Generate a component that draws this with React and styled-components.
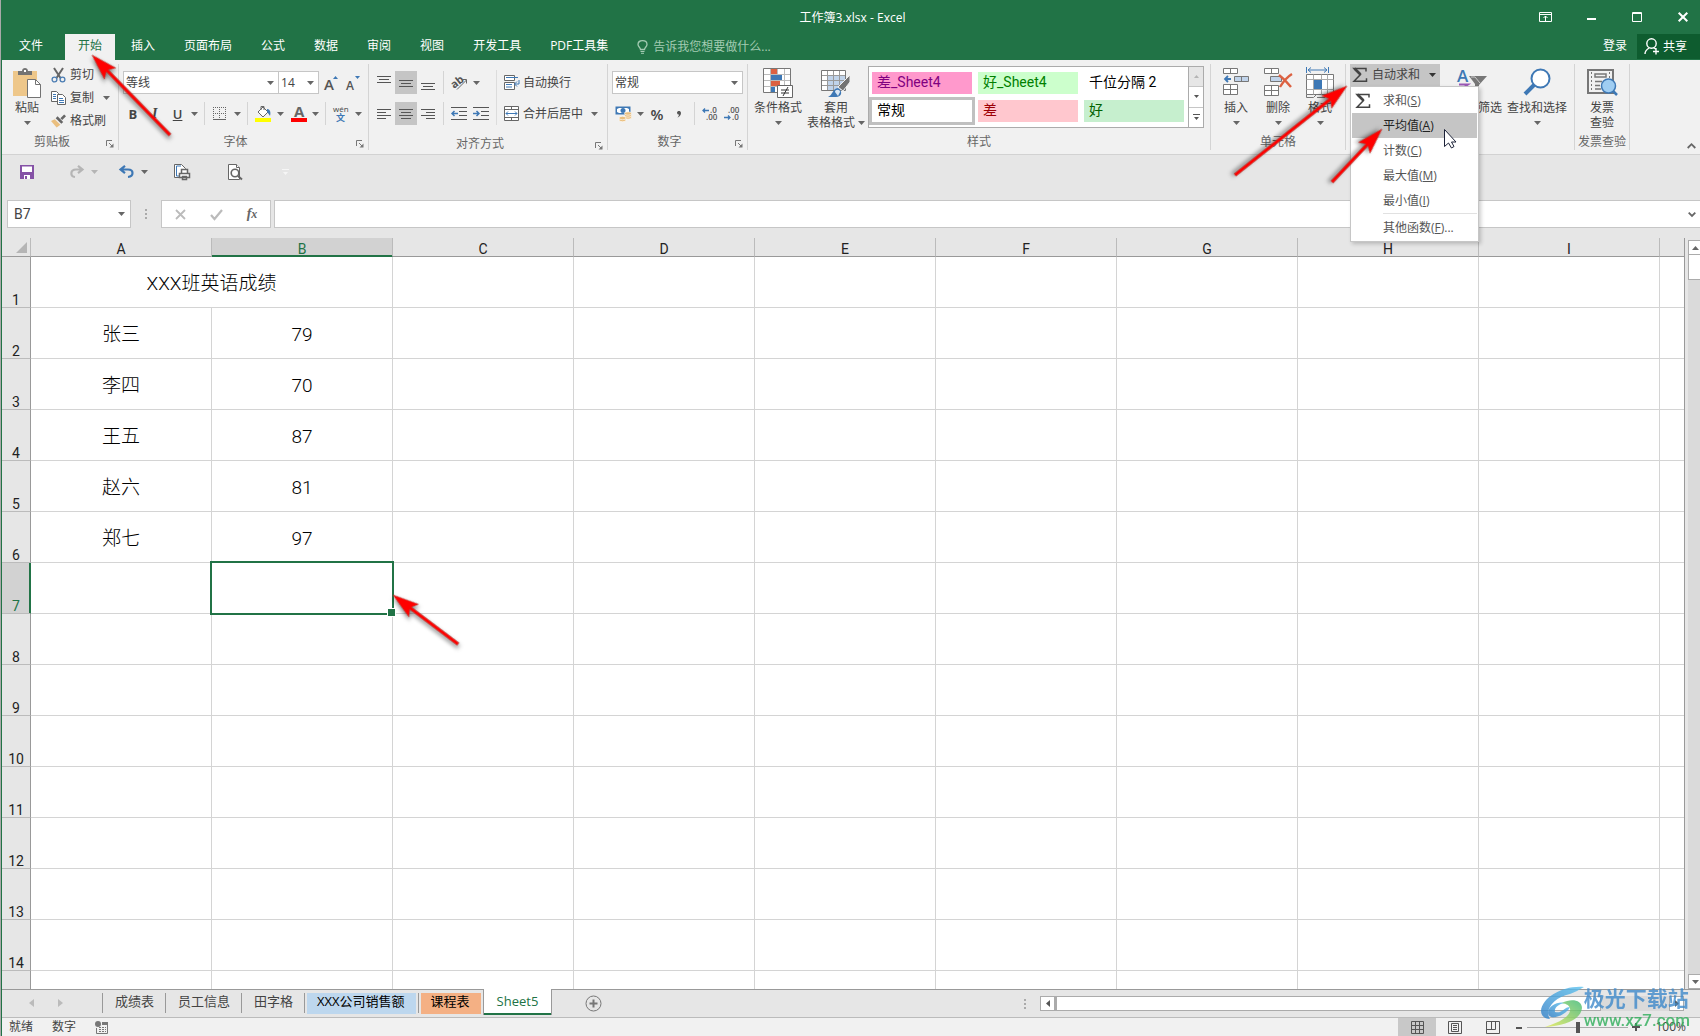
import React, { useState } from "react";
import styled, { createGlobalStyle } from "styled-components";

const COLUMNS = ["A", "B", "C", "D", "E", "F", "G", "H", "I"];
const ROWS = Array.from({ length: 15 }, (_, i) => i + 1);

const SCORES = {
  2: ["张三", 79],
  3: ["李四", 70],
  4: ["王五", 87],
  5: ["赵六", 81],
  6: ["郑七", 97],
};

const RIBBON_TABS = [
  "开始",
  "插入",
  "页面布局",
  "公式",
  "数据",
  "审阅",
  "视图",
  "开发工具",
  "PDF工具集",
];

const CELL_STYLES = [
  { name: "差_Sheet4", bg: "#ff99cc", color: "#800080" },
  { name: "好_Sheet4", bg: "#ccffcc", color: "#008000" },
  { name: "千位分隔 2", bg: "#ffffff", color: "#000000" },
  { name: "常规", bg: "#ffffff", color: "#000000", selected: true },
  { name: "差", bg: "#ffc7ce", color: "#9c0006" },
  { name: "好", bg: "#c6efce", color: "#006100" },
];

const SUM_MENU = [
  { label: "求和", key: "S", icon: true },
  { label: "平均值", key: "A", active: true },
  { label: "计数", key: "C" },
  { label: "最大值", key: "M" },
  { label: "最小值", key: "I" },
  { label: "其他函数", key: "F", more: true },
];

const SHEETS = [
  { name: "成绩表" },
  { name: "员工信息" },
  { name: "田字格" },
  { name: "XXX公司销售额", color: "#bdd7ee" },
  { name: "课程表", color: "#f4b084" },
];

/* ---------- icons ---------- */

const Caret = ({ color = "#666" }) => (
  <svg width="7" height="4" viewBox="0 0 7 4">
    <path d="M0 0h7L3.5 4z" fill={color} />
  </svg>
);

const LauncherIcon = () => (
  <svg width="8" height="8" viewBox="0 0 8 8" fill="none" stroke="#777">
    <path d="M.5 6V.5H6M3 3l3 3" />
    <path d="M7.500 3.500v4h-4z" fill="#777" stroke="none" />
  </svg>
);

const SigmaIcon = () => (
  <svg width="16" height="16" viewBox="0 0 16 16" fill="none" stroke="#444">
    <path d="M14 4.500V1.500H2l6.500 6L2 14.200h12.500v-3" strokeWidth="1.500" />
    <path d="M2.500 1.500l6 6" strokeWidth="2.600" />
  </svg>
);

const PasteIcon = () => (
  <svg width="28" height="30" viewBox="0 0 28 30">
    <path d="M0 3h24v25H0z" fill="#eec78a" />
    <path d="M5 3h4c0-4 6-4 6 0h4v4H5z" fill="#737373" />
    <path d="M11 2h2v2h-2z" fill="#fff" />
    <path d="M14.500 11.500h8l5 5v13h-13z" fill="#fff" stroke="#737373" />
    <path d="M22.500 11.500v5h5" fill="none" stroke="#737373" />
  </svg>
);

const CutIcon = () => (
  <svg width="14" height="15" viewBox="0 0 14 15" fill="none">
    <path d="M2.500 0l6.500 10M11.500 0L5 10" stroke="#666" strokeWidth="2" />
    <circle cx="3" cy="11.500" r="2.400" stroke="#4b7db3" strokeWidth="1.300" />
    <circle cx="11" cy="11.500" r="2.400" stroke="#4b7db3" strokeWidth="1.300" />
  </svg>
);

const CopyIcon = () => (
  <svg width="15" height="14" viewBox="0 0 15 14" fill="#fff" stroke="#666">
    <path d="M.5.500h5l2 2v8h-7z" />
    <path d="M2 3.500h3M2 5.500h3M2 7.500h3" stroke="#3e78b5" />
    <path d="M6.500 3.500h5l3 3v7h-8z" />
    <path d="M8 7.500h4M8 9.500h5M8 11.500h5" stroke="#3e78b5" />
  </svg>
);

const BrushIcon = () => (
  <svg width="16" height="14" viewBox="0 0 16 14">
    <path d="M0 7l4-2 6 6-4 3z" fill="#eabf7f" />
    <path d="M5 4l2-2 6 6-2 2z" fill="#666" />
    <path d="M10 4l4-4 2 2-4 4z" fill="#666" />
  </svg>
);

const BorderIcon = () => (
  <svg width="16" height="14" viewBox="-1 0 16 14" fill="none" stroke="#666">
    <path
      d="M.5 0v12M6.500 0v12M12.500 0v12M0 .5h13M0 6.500h13"
      strokeDasharray="1 1"
    />
    <path d="M0 12.500h13" />
  </svg>
);

const FillIcon = () => (
  <svg width="17" height="17" viewBox="0 0 17 17">
    <path d="M3 7l5-5 5 5-5 5z" fill="#fff" stroke="#666" />
    <path d="M6 5V1.500h3V5" fill="none" stroke="#666" />
    <path d="M12 4c3 0 4 3 3 7-1-2-2-3-3-4z" fill="#3e78b5" />
    <path d="M0 13h16v4H0z" fill="#ffff00" />
  </svg>
);

const LinesIcon = ({ rows, start = 0 }) => (
  <svg width="14" height="14" viewBox="0 0 14 14" stroke="#555">
    {rows.map(([x1, x2], i) => (
      <path key={i} d={`M${x1} ${start + i * 3 + 0.5}H${x2}`} />
    ))}
  </svg>
);

const THREE = [
  [0, 14],
  [2, 12],
  [0, 14],
];
const LEFT = [
  [0, 14],
  [0, 9],
  [0, 14],
  [0, 9],
];
const CENTER = [
  [0, 14],
  [2, 12],
  [0, 14],
  [2, 12],
];
const RIGHT = [
  [0, 14],
  [5, 14],
  [0, 14],
  [5, 14],
];

const OrientationIcon = () => (
  <svg width="17" height="15" viewBox="0 0 17 15" fill="none">
    <text
      x="1"
      y="12"
      fontSize="11"
      fontWeight="700"
      fontFamily="Open Sans"
      fill="#555"
      transform="rotate(-38 5 10)"
    >
      ab
    </text>
    <path d="M6 14.500L15.500 5M11.500 4.500h4v4" stroke="#666" />
  </svg>
);

const IndentIcon = ({ out }) => (
  <svg width="16" height="13" viewBox="0 0 16 13" fill="none" stroke="#555">
    <path d="M0 .5h16M8 4.500h8M8 8.500h8M0 12.500h16" />
    <path
      d={out ? "M7 6.500H1M3.500 4L1 6.500 3.500 9" : "M0 6.500h6M3.500 4L6 6.500 3.500 9"}
      stroke="#3e78b5"
      strokeWidth="1.500"
    />
  </svg>
);

const WrapIcon = () => (
  <svg width="16" height="15" viewBox="0 0 16 15" fill="#fff" stroke="#666">
    <path d="M.5.500h10v5H.5zM.5 7.500h10v7H.5z" />
    <path d="M2 2.500h12M2 9.500h6M2 12h6" stroke="#3e78b5" />
    <path d="M15 5v4h-4M13 6.500L10.500 9l2.500 2.500" stroke="#3e78b5" fill="none" />
  </svg>
);

const MergeIcon = () => (
  <svg width="16" height="15" viewBox="0 0 16 15" fill="#fff" stroke="#666">
    <path d="M.5.500h14v14H.5zM.5 3.500h14M.5 11.500h14M7.500.500v3M7.500 11.500v3" />
    <path
      d="M2 7.500h11M4 5.500l-2 2 2 2M11 5.500l2 2-2 2"
      stroke="#3e78b5"
      fill="none"
    />
  </svg>
);

const CurrencyIcon = () => (
  <svg width="17" height="16" viewBox="0 0 17 16">
    <path d="M.5.500h15v8H.5z" fill="#3e78b5" />
    <path d="M2 3l2-1h8l2 1v3l-2 1H4L2 6z" fill="#fff" />
    <circle cx="8" cy="4.500" r="2.500" fill="#3e78b5" />
    <g fill="#eabf7f" stroke="#fff" strokeWidth=".6">
      <ellipse cx="13" cy="11.500" rx="3.500" ry="1.700" />
      <ellipse cx="13" cy="9.500" rx="3.500" ry="1.700" />
      <ellipse cx="13" cy="7.500" rx="3.500" ry="1.700" />
      <ellipse cx="7.500" cy="14" rx="3.500" ry="1.700" />
      <ellipse cx="7.500" cy="12" rx="3.500" ry="1.700" />
    </g>
  </svg>
);

const DecimalIcon = ({ more }) => (
  <svg width="16" height="14" viewBox="0 0 16 14" fill="#555">
    <g fontFamily="Open Sans" fontSize="8" fontWeight="600">
      <text x={more ? 8 : 4} y="6">
        {more ? ".0" : ".00"}
      </text>
      <text x={more ? 4 : 8} y="13">
        {more ? ".00" : ".0"}
      </text>
    </g>
    <path
      d={more ? "M7 3.500H1M3 1.500l-2 2 2 2" : "M0 10.500h6M4 8.500l2 2-2 2"}
      fill="none"
      stroke="#3e78b5"
      strokeWidth="1.300"
    />
  </svg>
);

const ConditionalIcon = () => (
  <svg width="30" height="30" viewBox="0 0 30 30">
    <path d="M.5.500h27v24H.5z" fill="#fff" stroke="#777" />
    <path
      d="M7.500 1v23M14.500 1v23M21.500 1v23M1 6.500h26M1 12.500h26M1 18.500h26"
      stroke="#bbb"
    />
    <path d="M8 1h6v5H8zM8 13h9v5H8z" fill="#dc6141" />
    <path d="M8 7h11v5H8zM8 19h4v5H8z" fill="#3e78b5" />
    <path d="M14.500 17.500h15v12h-15z" fill="#fff" stroke="#666" />
    <path d="M18 22h8M18 25h8M25 19l-5 9" stroke="#333" />
  </svg>
);

const TableStyleIcon = () => (
  <svg width="30" height="30" viewBox="0 0 30 30">
    <path d="M.5 2.500h24v20H.5z" fill="#fff" stroke="#777" />
    <path d="M7 8h17v14H7z" fill="#c0d3ea" />
    <path
      d="M6.500 3v19M12.500 3v19M18.500 3v19M1 7.500h23M1 12.500h23M1 17.500h23"
      stroke="#999"
      fill="none"
    />
    <path d="M29 7v7l-7 9-5-4z" fill="#737373" stroke="#f1f1f1" />
    <path d="M7 29c5-2 4-8 10-9 5 3 4 9-2 9z" fill="#3e78b5" />
    <path d="M14 24c0-3 5-3 5 0l-2 4" fill="#dbe7f4" />
  </svg>
);

const InsertIcon = () => (
  <svg width="28" height="30" viewBox="0 0 28 30" fill="#fff" stroke="#777">
    <path d="M1.500.500h14v5h-14zM8.500.500v5M1.500 16.500h14v10h-14zM8.500 16.500v10M1.500 21.500h14" />
    <path d="M12.500 8.500h14v5h-14zM19.500 8.500v5" fill="#c0d3ea" />
    <path
      d="M9 11H3M6 8l-3 3 3 3"
      fill="none"
      stroke="#3e78b5"
      strokeWidth="1.800"
    />
  </svg>
);

const DeleteIcon = () => (
  <svg width="28" height="30" viewBox="0 0 28 30" fill="#fff" stroke="#777">
    <path d="M.5.500h14v5H.5zM7.500.500v5M.5 17.500h14v10H.5zM7.500 17.500v10M.5 22.500h14" />
    <path d="M6.500 8.500h11v5h-11z" fill="#c0d3ea" />
    <path
      d="M15 7c4 3 8 7 12 12M28 6c-5 3-9 8-12 13"
      fill="none"
      stroke="#dc6141"
      strokeWidth="2.400"
    />
  </svg>
);

const FormatIcon = () => (
  <svg width="28" height="30" viewBox="0 1 28 30" fill="#fff" stroke="#777">
    <path
      d="M.5 0v6M22.500 0v6M2 3h19M5 .5L2 3l3 2.500M18 .5L21 3l-3 2.500"
      fill="none"
      stroke="#3e78b5"
    />
    <path d="M.5 7.500h27v20H.5z" />
    <path
      d="M7.500 7.500v20M15.500 7.500v20M21.500 7.500v20M.5 12.500h27M.5 22.500h27"
      stroke="#aaa"
    />
    <path d="M8 13h8v9H8z" fill="#3e78b5" stroke="none" />
    <path d="M.5 27.500v3h7l3-3M11 30.500h8l3-3v3h5" fill="none" />
  </svg>
);

const SortIcon = () => (
  <svg width="30" height="30" viewBox="0 0 30 30">
    <text
      x="0"
      y="14"
      fontFamily="Open Sans"
      fontSize="17"
      fontWeight="600"
      fill="#3e78b5"
    >
      A
    </text>
    <path d="M2 16.500h9L6 20" stroke="#9b59b6" strokeWidth="2" fill="none" />
    <path d="M12 8h18l-8 9v8l-4-3v-6z" fill="#777" />
    <path d="M14 9h4l5 6" stroke="#ccc" fill="none" />
  </svg>
);

const FindIcon = () => (
  <svg width="28" height="30" viewBox="0 0 28 30" fill="none">
    <path d="M11 17L2 26" stroke="#3e78b5" strokeWidth="4" />
    <circle cx="17.500" cy="10.500" r="9" fill="#fff" stroke="#3e78b5" strokeWidth="2" />
  </svg>
);

const InvoiceIcon = () => (
  <svg width="30" height="30" viewBox="0 0 30 30" fill="none" stroke="#777">
    <path d="M1 2h25v23H1z" strokeWidth="2" />
    <path d="M4.500 4v20M22.500 4v8" strokeDasharray="2 2" />
    <path d="M8 6h11v3H8zM8 13.500h7M8 17.500h5M8 21h6" strokeWidth="1.500" />
    <circle cx="21.500" cy="18" r="7" fill="#9fcdf2" stroke="#3e78b5" strokeWidth="1.500" />
    <path d="M26 23l4 4" stroke="#3e78b5" strokeWidth="2.500" />
  </svg>
);

const SaveIcon = () => (
  <svg width="14" height="14" viewBox="0 0 14 14">
    <path d="M0 0h14v14H0z" fill="#8552a6" />
    <path d="M2 1.500h10V7H2zM4 10h6v4H4z" fill="#fff" />
    <path d="M5 11h2v3H5z" fill="#8552a6" />
  </svg>
);

const UndoIcon = ({ flip, color }) => (
  <svg width="14" height="14" viewBox={flip ? "1 0 14 14" : "1 0 14 14"} fill="none">
    <path
      d={
        flip
          ? "M13 4.500H7c-6 0-6 7-1 7.500M9 .8l4.500 3.700L9 8.200"
          : "M2 4.500h7c6 0 6 7 0 7.500M6 .8L1.500 4.500 6 8.200"
      }
      stroke={color}
      strokeWidth="2.200"
    />
  </svg>
);

const PrintIcon = () => (
  <svg width="17" height="16" viewBox="0 0 17 16" fill="#fff" stroke="#666">
    <path d="M.5.500h7l4 4v9H.5z" />
    <path d="M7 2H2.500v10H5" fill="none" stroke="#3e78b5" />
    <path
      d="M7.500 5.500h6v4h-6zM5.500 9.500h10v4h-10zM8.500 12.500h4v3h-4z"
      strokeWidth="1.500"
    />
  </svg>
);

const PreviewIcon = () => (
  <svg width="15" height="16" viewBox="0 0 15 16" fill="#fff" stroke="#666">
    <path d="M.5.500h8l3 3v12H.5z" />
    <path d="M8.500.500v3h3" />
    <circle cx="7" cy="9" r="3.800" strokeWidth="1.600" />
    <path d="M10 12l4 3.500" strokeWidth="2" />
  </svg>
);

const BulbIcon = () => (
  <svg width="11" height="14" viewBox="0 0 11 14" fill="none" stroke="#a3cbb2">
    <path
      d="M3.500 9.500C3.500 7.500 1 7 1 4.500 1 2 3 .7 5.500.7S10 2 10 4.500C10 7 7.500 7.500 7.500 9.500z"
      strokeWidth="1.300"
    />
    <path d="M3.500 11.500h4M4 13.300h3" />
  </svg>
);

const ShareIcon = () => (
  <svg width="16" height="17" viewBox="0 0 16 17" fill="none" stroke="#fff">
    <circle cx="7.500" cy="5.500" r="4.700" strokeWidth="1.400" />
    <path
      d="M1 16c0-3 1.500-4.500 4-6M9.500 9.500l2 1.500M12 10v6.500M9 13.500h6"
      strokeWidth="1.400"
    />
  </svg>
);

const Arrow = ({ tip, tail }) => {
  const dx = tail[0] - tip[0];
  const dy = tail[1] - tip[1];
  const len = Math.hypot(dx, dy);
  const deg = (Math.atan2(dy, dx) * 180) / Math.PI;
  return (
    <g transform={`translate(${tip[0]} ${tip[1]}) rotate(${deg})`}>
      <path
        d={`M0 0L26 -8L22 -1.500H${len}V1.500H22L26 8Z`}
        fill="#ff0000"
        stroke="#b03a30"
        strokeWidth=".5"
      />
    </g>
  );
};

/* ---------- page ---------- */

const App = () => {
  const [tab, setTab] = useState("开始");
  const [font, setFont] = useState("等线");
  const [size, setSize] = useState("14");
  const [format, setFormat] = useState("常规");
  const [formula, setFormula] = useState("");
  const [cell, setCell] = useState("B7");
  const [zoom, setZoom] = useState(50);

  return (
    <Window>
      <GlobalStyle />
      <TitleBar>
        <Title>工作簿3.xlsx - Excel</Title>
        <WindowControls>
          <button aria-label="功能区显示选项">
            <svg width="13" height="10" viewBox="0 0 13 10" fill="none" stroke="#fff">
              <path d="M.5.500h12v9H.5zM.5 2.500h12M6.500 9V4M4.500 6l2-2 2 2" />
            </svg>
          </button>
          <button aria-label="最小化">
            <svg width="9" height="10" viewBox="0 0 9 10">
              <path d="M0 6h9v2H0z" fill="#fff" />
            </svg>
          </button>
          <button aria-label="最大化">
            <svg width="10" height="10" viewBox="0 0 10 10" fill="none" stroke="#fff">
              <path d="M.5.500h9v9h-9zM0 1.500h10" />
            </svg>
          </button>
          <button aria-label="关闭">
            <svg width="10" height="10" viewBox="0 0 10 10">
              <path d="M.7.700l8.600 8.600M9.300.700L.7 9.300" stroke="#fff" strokeWidth="2" />
            </svg>
          </button>
        </WindowControls>
      </TitleBar>

      <TabBar>
        <FileTab>文件</FileTab>
        {RIBBON_TABS.map((name) => (
          <RibbonTab key={name} $active={name === tab} onClick={() => setTab(name)}>
            {name}
          </RibbonTab>
        ))}
        <TellMe>
          <BulbIcon />
          告诉我您想要做什么...
        </TellMe>
        <SignIn>登录</SignIn>
        <Share>
          <ShareIcon />
          共享
        </Share>
      </TabBar>

      <Body>
        <Ribbon>
          <Group $width={117}>
            <GroupBody>
              <BigButton $width={42}>
                <PasteIcon />
                <span>粘贴</span>
                <span>
                  <Caret />
                </span>
              </BigButton>
              <SmallStack>
                <SmallButton>
                  <CutIcon />
                  剪切
                </SmallButton>
                <SmallButton>
                  <CopyIcon />
                  复制
                  <CaretSlot>
                    <Caret />
                  </CaretSlot>
                </SmallButton>
                <SmallButton>
                  <BrushIcon />
                  格式刷
                </SmallButton>
              </SmallStack>
            </GroupBody>
            <GroupFooter label="剪贴板" launcher />
          </Group>

          <Group $width={250}>
            <ToolRows>
              <ToolRow>
                <Combo $width={158}>
                  <select
                    aria-label="字体"
                    value={font}
                    onChange={(e) => setFont(e.target.value)}
                  >
                    <option>等线</option>
                  </select>
                  <Caret />
                </Combo>
                <Combo $width={41}>
                  <select
                    aria-label="字号"
                    value={size}
                    onChange={(e) => setSize(e.target.value)}
                  >
                    <option>14</option>
                  </select>
                  <Caret />
                </Combo>
                <Tool aria-label="增大字号">
                  <svg width="14" height="16" viewBox="0 0 14 16" fill="#555">
                    <text x="0" y="15" fontFamily="Open Sans" fontSize="15" fontWeight="600">
                      A
                    </text>
                    <path d="M9 4l2.500-3L14 4z" fill="#3e78b5" />
                  </svg>
                </Tool>
                <Tool aria-label="减小字号">
                  <svg width="14" height="16" viewBox="0 0 14 16" fill="#555">
                    <text x="0" y="15" fontFamily="Open Sans" fontSize="12" fontWeight="600">
                      A
                    </text>
                    <path d="M9 1l2.500 3L14 1z" fill="#3e78b5" />
                  </svg>
                </Tool>
              </ToolRow>
              <ToolRow $gap={2}>
                <Tool $width={20}>
                  <b>B</b>
                </Tool>
                <Tool $width={20}>
                  <i>I</i>
                </Tool>
                <SplitTool>
                  <u>U</u>
                  <Caret />
                </SplitTool>
                <Divider $space={2} />
                <SplitTool aria-label="边框">
                  <BorderIcon />
                  <Caret />
                </SplitTool>
                <Divider $space={2} />
                <SplitTool aria-label="填充颜色">
                  <FillIcon />
                  <Caret />
                </SplitTool>
                <SplitTool aria-label="字体颜色">
                  <svg width="16" height="17" viewBox="0 0 16 17">
                    <text
                      x="3"
                      y="12"
                      fontFamily="Open Sans"
                      fontSize="15"
                      fontWeight="700"
                      fill="#666"
                    >
                      A
                    </text>
                    <path d="M0 13h16v4H0z" fill="#ff0000" />
                  </svg>
                  <Caret />
                </SplitTool>
                <Divider $space={2} />
                <SplitTool aria-label="拼音">
                  <svg width="16" height="17" viewBox="0 0 16 17">
                    <text x="0" y="7" fontFamily="Open Sans" fontSize="8" fill="#444">
                      wén
                    </text>
                    <text
                      x="3"
                      y="16"
                      fontFamily="Noto Sans CJK SC"
                      fontSize="9"
                      fontWeight="700"
                      fill="#3e78b5"
                    >
                      文
                    </text>
                  </svg>
                  <Caret />
                </SplitTool>
              </ToolRow>
            </ToolRows>
            <GroupFooter label="字体" launcher />
          </Group>

          <Group $width={239}>
            <GroupBody>
              <ToolRows $width={120}>
                <ToolRow>
                  <Tool aria-label="顶端对齐">
                    <LinesIcon rows={THREE} start={0} />
                  </Tool>
                  <Tool aria-label="垂直居中" $on>
                    <LinesIcon rows={THREE} start={4} />
                  </Tool>
                  <Tool aria-label="底端对齐">
                    <LinesIcon rows={THREE} start={7} />
                  </Tool>
                  <Divider $space={4} />
                  <SplitTool aria-label="方向">
                    <OrientationIcon />
                    <Caret />
                  </SplitTool>
                </ToolRow>
                <ToolRow>
                  <Tool aria-label="左对齐">
                    <LinesIcon rows={LEFT} start={2} />
                  </Tool>
                  <Tool aria-label="居中" $on>
                    <LinesIcon rows={CENTER} start={2} />
                  </Tool>
                  <Tool aria-label="右对齐">
                    <LinesIcon rows={RIGHT} start={2} />
                  </Tool>
                  <Divider $space={4} />
                  <Tool aria-label="减少缩进量">
                    <IndentIcon out />
                  </Tool>
                  <Tool aria-label="增加缩进量">
                    <IndentIcon />
                  </Tool>
                </ToolRow>
              </ToolRows>
              <TallDivider />
              <ToolRows>
                <WideTool>
                  <WrapIcon />
                  自动换行
                </WideTool>
                <WideTool>
                  <MergeIcon />
                  合并后居中
                  <CaretSlot>
                    <Caret />
                  </CaretSlot>
                </WideTool>
              </ToolRows>
            </GroupBody>
            <GroupFooter label="对齐方式" launcher />
          </Group>

          <Group $width={140}>
            <ToolRows>
              <ToolRow>
                <Combo $width={131}>
                  <select
                    aria-label="数字格式"
                    value={format}
                    onChange={(e) => setFormat(e.target.value)}
                  >
                    <option>常规</option>
                  </select>
                  <Caret />
                </Combo>
              </ToolRow>
              <ToolRow>
                <SplitTool aria-label="会计数字格式">
                  <CurrencyIcon />
                  <Caret />
                </SplitTool>
                <Tool>
                  <Percent>%</Percent>
                </Tool>
                <Tool aria-label="千位分隔样式">
                  <svg width="6" height="8" viewBox="0 0 6 8">
                    <path
                      d="M1 2.500C1 .5 5 .2 5 3 5 5.500 3 7 1.500 7.500 2.500 6.500 3 5.500 3 4.500 2 4.800 1 3.800 1 2.500z"
                      fill="#555"
                    />
                  </svg>
                </Tool>
                <Divider $space={4} />
                <Tool aria-label="增加小数位数">
                  <DecimalIcon more />
                </Tool>
                <Tool aria-label="减少小数位数">
                  <DecimalIcon />
                </Tool>
              </ToolRow>
            </ToolRows>
            <GroupFooter label="数字" launcher />
          </Group>

          <Group $width={463}>
            <GroupBody>
              <BigButton $width={52}>
                <ConditionalIcon />
                <span>条件格式</span>
                <span>
                  <Caret />
                </span>
              </BigButton>
              <BigButton $width={64}>
                <TableStyleIcon />
                <span>套用</span>
                <span>
                  表格格式
                  <Caret />
                </span>
              </BigButton>
              <Gallery>
                <GalleryGrid>
                  {CELL_STYLES.map(({ name, bg, color, selected }) => (
                    <StyleSwatch key={name} $bg={bg} $color={color} $selected={selected}>
                      {name}
                    </StyleSwatch>
                  ))}
                </GalleryGrid>
                <GalleryScroll>
                  <button aria-label="上一行" disabled>
                    <svg width="5" height="3" viewBox="0 0 5 3">
                      <path d="M0 3h5L2.500 0z" fill="#b5b5b5" />
                    </svg>
                  </button>
                  <button aria-label="下一行">
                    <svg width="5" height="3" viewBox="0 0 5 3">
                      <path d="M0 0h5L2.500 3z" fill="#555" />
                    </svg>
                  </button>
                  <button aria-label="其他样式">
                    <svg width="7" height="7" viewBox="0 0 7 7">
                      <path d="M0 0h7v1H0zM1 3h5L3.500 6z" fill="#555" />
                    </svg>
                  </button>
                </GalleryScroll>
              </Gallery>
            </GroupBody>
            <GroupFooter label="样式" />
          </Group>

          <Group $width={135}>
            <GroupBody>
              <BigButton $width={42}>
                <InsertIcon />
                <span>插入</span>
                <span>
                  <Caret />
                </span>
              </BigButton>
              <BigButton $width={42}>
                <DeleteIcon />
                <span>删除</span>
                <span>
                  <Caret />
                </span>
              </BigButton>
              <BigButton $width={42}>
                <FormatIcon />
                <span>格式</span>
                <span>
                  <Caret />
                </span>
              </BigButton>
            </GroupBody>
            <GroupFooter label="单元格" />
          </Group>

          <Group $width={229}>
            <GroupBody>
              <AutoSum>
                <AutoSumButton aria-expanded="true">
                  <SigmaIcon />
                  自动求和
                  <CaretSlot>
                    <Caret color="#333" />
                  </CaretSlot>
                </AutoSumButton>
                <SumMenu>
                  {SUM_MENU.map(({ label, key, icon, active, more }) => (
                    <li key={key}>
                      {more && <MenuRule />}
                      <MenuItem $active={active}>
                        <MenuIcon>{icon && <SigmaIcon />}</MenuIcon>
                        <span>
                          {label}(<u>{key}</u>){more && "..."}
                        </span>
                      </MenuItem>
                    </li>
                  ))}
                </SumMenu>
              </AutoSum>
              <BigButton $width={64}>
                <SortIcon />
                <span>排序和筛选</span>
              </BigButton>
              <BigButton $width={66}>
                <FindIcon />
                <span>查找和选择</span>
                <span>
                  <Caret />
                </span>
              </BigButton>
            </GroupBody>
          </Group>

          <Group $width={55}>
            <GroupBody>
              <BigButton $width={46}>
                <InvoiceIcon />
                <span>发票</span>
                <span>查验</span>
              </BigButton>
            </GroupBody>
            <GroupFooter label="发票查验" />
          </Group>

          <Collapse aria-label="折叠功能区">
            <svg width="9" height="6" viewBox="0 0 9 6">
              <path
                d="M.7 5l3.800-3.800L8.300 5"
                fill="none"
                stroke="#666"
                strokeWidth="1.800"
              />
            </svg>
          </Collapse>
        </Ribbon>

        <QuickAccess>
          <QuickButton aria-label="保存">
            <SaveIcon />
          </QuickButton>
          <QuickButton aria-label="恢复">
            <UndoIcon flip color="#b5b5b5" />
            <Caret color="#b5b5b5" />
          </QuickButton>
          <QuickButton aria-label="撤消" $wide>
            <UndoIcon color="#3e78b5" />
            <Caret />
          </QuickButton>
          <QuickButton aria-label="快速打印" $wide>
            <PrintIcon />
          </QuickButton>
          <QuickButton aria-label="打印预览" $wide>
            <PreviewIcon />
          </QuickButton>
          <QuickButton aria-label="自定义快速访问工具栏">
            <svg width="7" height="7" viewBox="0 0 7 7">
              <path d="M0 0h7v1H0zM1 3h5L3.500 6z" fill="#f6f6f6" />
            </svg>
          </QuickButton>
        </QuickAccess>

        <FormulaBar>
          <NameBox>
            <input
              aria-label="名称框"
              value={cell}
              onChange={(e) => setCell(e.target.value)}
            />
            <Caret />
          </NameBox>
          <Grip>
            <Dots />
          </Grip>
          <FormulaButtons>
            <button aria-label="取消">
              <svg width="11" height="11" viewBox="0 0 11 11">
                <path d="M1 1l9 9M10 1l-9 9" stroke="#bbb" strokeWidth="1.800" />
              </svg>
            </button>
            <button aria-label="输入">
              <svg width="13" height="11" viewBox="0 0 13 11">
                <path d="M1 6l3.500 4L12 1" fill="none" stroke="#bbb" strokeWidth="2.200" />
              </svg>
            </button>
            <button aria-label="插入函数">
              <Fx>
                f<small>x</small>
              </Fx>
            </button>
          </FormulaButtons>
          <FormulaField>
            <input
              aria-label="编辑栏"
              value={formula}
              onChange={(e) => setFormula(e.target.value)}
            />
            <svg width="8" height="5" viewBox="0 0 8 5">
              <path
                d="M.7.700L4 4 7.300.700"
                fill="none"
                stroke="#666"
                strokeWidth="1.800"
              />
            </svg>
          </FormulaField>
        </FormulaBar>

        <SheetArea>
          <SheetViewport>
            <Grid>
              <colgroup>
                <HeaderCol />
                {COLUMNS.map((c) => (
                  <DataCol key={c} />
                ))}
                <col />
              </colgroup>
              <thead>
                <tr>
                  <Corner aria-label="全选">
                    <svg width="11" height="11" viewBox="0 0 11 11">
                      <path d="M11 0v11H0z" fill="#b5b5b5" />
                    </svg>
                  </Corner>
                  {COLUMNS.map((c) => (
                    <ColumnHeader key={c} scope="col" $active={c === "B"}>
                      {c}
                    </ColumnHeader>
                  ))}
                  <ColumnHeader />
                </tr>
              </thead>
              <tbody>
                {ROWS.map((row) => (
                  <tr key={row}>
                    <RowHeader scope="row" $active={row === 7}>
                      {row}
                    </RowHeader>
                    {row === 1 && <Cell colSpan={2}>XXX班英语成绩</Cell>}
                    {COLUMNS.slice(row === 1 ? 2 : 0).map((c, i) => (
                      <Cell key={c} $selected={row === 7 && c === "B"}>
                        {row > 1 && SCORES[row]?.[i]}
                      </Cell>
                    ))}
                    <Cell />
                  </tr>
                ))}
              </tbody>
            </Grid>
          </SheetViewport>
          <VScroll>
            <button aria-label="向上滚动">
              <svg width="7" height="4" viewBox="0 0 7 4">
                <path d="M0 4h7L3.500 0z" fill="#666" />
              </svg>
            </button>
            <VThumb />
            <VTrack />
            <button aria-label="向下滚动">
              <Caret />
            </button>
          </VScroll>
        </SheetArea>

        <SheetBar>
          <SheetNav>
            <svg width="5" height="8" viewBox="0 0 5 8">
              <path d="M5 0v8L0 4z" fill="#bbb" />
            </svg>
            <svg width="5" height="8" viewBox="0 0 5 8">
              <path d="M0 0v8l5-4z" fill="#bbb" />
            </svg>
          </SheetNav>
          {SHEETS.map(({ name, color }) => (
            <SheetTab key={name} $color={color}>
              <span>{name}</span>
            </SheetTab>
          ))}
          <ActiveSheet>Sheet5</ActiveSheet>
          <AddSheet aria-label="新工作表">
            <svg width="17" height="17" viewBox="0 0 17 17" fill="none" stroke="#777">
              <circle cx="8.500" cy="8.500" r="7.500" />
              <path d="M8.500 4.500v8M4.500 8.500h8" strokeWidth="2" />
            </svg>
          </AddSheet>
          <HScroll>
            <Grip>
              <Dots />
            </Grip>
            <button aria-label="向左滚动">
              <svg width="4" height="7" viewBox="0 0 4 7">
                <path d="M4 0v7L0 3.500z" fill="#555" />
              </svg>
            </button>
            <HThumb />
            <HTrack />
            <button aria-label="向右滚动">
              <svg width="4" height="7" viewBox="0 0 4 7">
                <path d="M0 0v7l4-3.500z" fill="#555" />
              </svg>
            </button>
          </HScroll>
        </SheetBar>

        <StatusBar>
          <span>就绪</span>
          <span>数字</span>
          <svg width="13" height="13" viewBox="0 0 13 13" fill="#777">
            <circle cx="3" cy="3" r="3" />
            <path d="M7 1h6v3H7z" />
            <path d="M1.500 7v5.500h11V4" fill="none" stroke="#777" />
            <path
              d="M4 6.500h7M4 8.500h7M4 10.500h7"
              fill="none"
              stroke="#777"
              strokeDasharray="2 1"
            />
          </svg>
          <StatusRight>
            <ViewButton aria-label="普通" $on>
              <svg width="13" height="13" viewBox="0 0 13 13" fill="none" stroke="#555">
                <path d="M.5.500h12v12H.5zM4.500.500v12M8.500.500v12M.5 4.500h12M.5 8.500h12" />
              </svg>
            </ViewButton>
            <ViewButton aria-label="页面布局视图">
              <svg width="14" height="13" viewBox="0 0 14 13" fill="none" stroke="#555">
                <path d="M.5.500h13v12H.5zM3.500 2.500h7v8h-7zM5 4.500h4M5 6.500h4M5 8.500h4" />
              </svg>
            </ViewButton>
            <ViewButton aria-label="分页预览">
              <svg width="14" height="13" viewBox="0 0 14 13" fill="none" stroke="#555">
                <path d="M.5.500h13v12H.5zM5.500.500v8M.5 8.500h9M9.500.500v8" />
              </svg>
            </ViewButton>
            <ZoomStep aria-label="缩小">
              <svg width="7" height="7" viewBox="0 0 7 7">
                <path d="M0 3h6v2H0z" fill="#555" />
              </svg>
            </ZoomStep>
            <ZoomSlider
              type="range"
              aria-label="缩放"
              value={zoom}
              onChange={(e) => setZoom(e.target.value)}
            />
            <ZoomStep aria-label="放大">
              <svg width="8" height="8" viewBox="0 0 8 8">
                <path d="M0 3h8v2H0zM3 0h2v8H3z" fill="#555" />
              </svg>
            </ZoomStep>
            <ZoomValue>100%</ZoomValue>
          </StatusRight>
        </StatusBar>
      </Body>

      <Annotations aria-hidden="true">
        <Arrow tip={[92, 55]} tail={[170, 135]} />
        <Arrow tip={[1347, 86]} tail={[1235, 175]} />
        <Arrow tip={[1382, 129]} tail={[1332, 182]} />
        <Arrow tip={[393, 595]} tail={[458, 644]} />
        <path
          d="M1444.500 129.500v17l4-3.500 3 5 2.500-1.500-2.500-4.500h4.500z"
          fill="#fff"
          stroke="#1c2238"
        />
      </Annotations>

      <Watermark>
        <svg width="44" height="42" viewBox="0 0 44 42">
          <defs>
            <linearGradient id="wmBlue" x1="0" y1="1" x2="1" y2="0">
              <stop offset="0" stopColor="#2f7fc8" />
              <stop offset="1" stopColor="#5cc3f0" />
            </linearGradient>
            <linearGradient id="wmGreen" x1="0" y1="1" x2="1" y2="0">
              <stop offset="0" stopColor="#e3ea52" />
              <stop offset="1" stopColor="#3cb873" />
            </linearGradient>
          </defs>
          <path
            d="M44 1C24-1 2 11 1 25c0 5 4 8 9 8-6-9 4-22 20-25 5-2 9-4 14-7z"
            fill="url(#wmBlue)"
          />
          <path
            d="M8 27c0-7 10-12 17-10-7 1-11 5-10 9 7 2 9-5 15-5-3 8-21 15-22 6z"
            fill="url(#wmBlue)"
          />
          <path
            d="M22 17c9-5 20-3 20 5-1 11-16 18-37 19 9-3 23-8 25-16 1-5-3-7-8-8z"
            fill="url(#wmGreen)"
          />
        </svg>
        <div>
          <strong>极光下载站</strong>
          <em>www.xz7.com</em>
        </div>
      </Watermark>
    </Window>
  );
};

const GroupFooter = ({ label, launcher }) => (
  <Footer>
    <span>{label}</span>
    {launcher && (
      <button aria-label={`${label}设置`}>
        <LauncherIcon />
      </button>
    )}
  </Footer>
);

/* ---------- styles ---------- */

const GlobalStyle = createGlobalStyle`
  * {
    box-sizing: border-box;
  }
  body {
    margin: 0;
    font: 12px/16px "Open Sans", "Noto Sans CJK SC", sans-serif;
    color: #444;
  }
  button,
  input,
  select {
    font: inherit;
    color: inherit;
    margin: 0;
    padding: 0;
    border: 0;
    background: none;
    outline: none;
  }
  svg {
    flex-shrink: 0;
    display: block;
    overflow: visible;
  }
`;

const Window = styled.div`
  position: relative;
  height: 100vh;
  display: flex;
  flex-direction: column;
  overflow: hidden;
  background: #e6e6e6;
  border-left: 1px solid #a9a9a9;
`;

const TitleBar = styled.header`
  display: grid;
  grid-template-columns: 1fr auto 1fr;
  align-items: center;
  height: 34px;
  background: #217346;
  color: #fff;
`;

const Title = styled.div`
  grid-column: 2;
  padding: 2px 0 0 4px;
`;

const WindowControls = styled.div`
  display: flex;
  justify-content: flex-end;
  gap: 12px;
  button {
    width: 34px;
    height: 30px;
    display: flex;
    align-items: center;
    justify-content: center;
  }
`;

const TabBar = styled.nav`
  display: flex;
  align-items: stretch;
  gap: 3px;
  height: 26px;
  padding-left: 5px;
  background: #217346;
  color: #fff;
`;

const RibbonTab = styled.button`
  padding: 0 13px 2px;
  white-space: nowrap;
  background: ${({ $active }) => ($active ? "#f1f1f1" : "none")};
  color: ${({ $active }) => ($active ? "#217346" : "#fff")};
`;

const FileTab = styled(RibbonTab)`
  margin-right: 6px;
`;

const TellMe = styled.button`
  display: flex;
  align-items: center;
  gap: 5px;
  padding-left: 13px;
  color: #a3cbb2;
`;

const SignIn = styled.button`
  margin-left: auto;
  padding: 0 7px 2px;
`;

const Share = styled.button`
  display: flex;
  align-items: center;
  gap: 3px;
  width: 63px;
  height: 25px;
  padding-left: 7px;
  background: #0e5c2f;
`;

const Body = styled.main`
  flex: 1;
  min-height: 0;
  display: flex;
  flex-direction: column;
  border-left: 1px solid #217346;
`;

const Ribbon = styled.section`
  display: flex;
  height: 95px;
  padding-top: 4px;
  background: #f1f1f1;
  border-bottom: 1px solid #d2d2d2;
`;

const Group = styled.div`
  width: ${({ $width }) => $width}px;
  height: 86px;
  flex-shrink: 0;
  display: flex;
  flex-direction: column;
  padding: 0 4px;
  border-right: 1px solid #d4d4d4;
`;

const GroupBody = styled.div`
  display: flex;
  height: 72px;
`;

const Footer = styled.div`
  display: flex;
  align-items: center;
  height: 16px;
  color: #666;
  span {
    flex: 1;
    text-align: center;
    white-space: nowrap;
    margin: 0 -4px;
  }
  button {
    display: flex;
    justify-content: flex-end;
    width: 16px;
    padding-top: 4px;
  }
`;

const BigButton = styled.button`
  width: ${({ $width }) => $width}px;
  display: flex;
  flex-direction: column;
  align-items: center;
  padding-top: 4px;
  > svg {
    height: 30px;
    margin-bottom: 2px;
  }
  span {
    display: flex;
    align-items: center;
    gap: 3px;
    height: 15px;
    white-space: nowrap;
  }
`;

const SmallStack = styled.div`
  display: flex;
  flex-direction: column;
  gap: 1px;
`;

const SmallButton = styled.button`
  display: flex;
  align-items: center;
  height: 22px;
  gap: 4px;
  padding-left: 3px;
  white-space: nowrap;
  svg:first-child {
    width: 15px;
  }
`;

const CaretSlot = styled.span`
  padding-left: 5px;
  svg:first-child {
    width: 7px;
  }
`;

const ToolRows = styled.div`
  width: ${({ $width }) => ($width ? `${$width}px` : "auto")};
  height: 72px;
  display: flex;
  flex-direction: column;
  gap: 8px;
  padding-top: 7px;
`;

const ToolRow = styled.div`
  display: flex;
  height: 23px;
  gap: ${({ $gap }) => $gap || 0}px;
`;

const Tool = styled.button`
  width: ${({ $width }) => $width || 22}px;
  height: 23px;
  display: flex;
  align-items: center;
  justify-content: center;
  background: ${({ $on }) => ($on ? "#c5c5c5" : "none")};
  b,
  i {
    font-size: 13px;
    font-weight: 700;
  }
  i {
    font-family: "Liberation Serif", serif;
    font-size: 14px;
  }
`;

const SplitTool = styled.button`
  width: 34px;
  height: 23px;
  display: flex;
  align-items: center;
  justify-content: space-between;
  padding: 0 2px 0 3px;
  u {
    width: 16px;
    text-align: center;
    font-size: 13px;
    font-weight: 600;
  }
`;

const WideTool = styled.button`
  display: flex;
  align-items: center;
  height: 23px;
  gap: 3px;
  padding-left: 4px;
  white-space: nowrap;
`;

const Percent = styled.span`
  font-size: 15px;
  font-weight: 600;
`;

const Divider = styled.span`
  width: 1px;
  height: 23px;
  margin: 0 ${({ $space }) => $space}px;
  background: #d4d4d4;
`;

const TallDivider = styled.span`
  width: 1px;
  height: 55px;
  margin: 6px 3px 0;
  background: #dcdcdc;
`;

const Combo = styled.div`
  display: flex;
  align-items: center;
  width: ${({ $width }) => $width}px;
  height: 23px;
  padding: 0 4px 0 2px;
  background: #fff;
  border: 1px solid #c6c6c6;
  & + & {
    margin-left: -1px;
    margin-right: 2px;
  }
  select {
    flex: 1;
    min-width: 0;
    height: 21px;
    appearance: none;
  }
`;

const Gallery = styled.div`
  display: flex;
  flex: 1;
  height: 62px;
  margin: 2px 2px 0 0;
  background: #fff;
  border: 1px solid #ababab;
`;

const GalleryGrid = styled.div`
  flex: 1;
  display: grid;
  grid-template-columns: repeat(3, 1fr);
  grid-auto-rows: 22px;
  gap: 6px;
  padding: 5px 4px 5px 3px;
`;

const StyleSwatch = styled.button`
  padding: 0 5px 2px;
  text-align: left;
  font: 14px/20px Roboto, "Noto Sans CJK SC", sans-serif;
  background: ${({ $bg }) => $bg};
  color: ${({ $color }) => $color};
  box-shadow: ${({ $selected }) => ($selected ? "0 0 0 3px #c0c0c0" : "none")};
`;

const GalleryScroll = styled.div`
  width: 15px;
  display: flex;
  flex-direction: column;
  border-left: 1px solid #ababab;
  button {
    flex: 1;
    display: flex;
    align-items: center;
    justify-content: center;
  }
  button + button {
    border-top: 1px solid #c6c6c6;
  }
  button:disabled {
    background: #e6e6e6;
  }
`;

const AutoSum = styled.div`
  position: relative;
  width: 90px;
`;

const AutoSumButton = styled.button`
  display: flex;
  align-items: center;
  gap: 4px;
  width: 90px;
  height: 22px;
  padding-left: 2px;
  background: #c5c5c5;
  white-space: nowrap;
`;

const SumMenu = styled.ul`
  position: absolute;
  z-index: 2;
  top: 22px;
  left: 0;
  width: 129px;
  margin: 0;
  padding: 1px;
  list-style: none;
  background: #fff;
  border: 1px solid #c6c6c6;
  box-shadow: 2px 2px 4px rgba(0, 0, 0, 0.2);
`;

const MenuItem = styled.button`
  display: flex;
  align-items: center;
  width: 100%;
  height: 25px;
  background: ${({ $active }) => ($active ? "#c5c5c5" : "none")};
  color: ${({ $active }) => ($active ? "#222" : "#555")};
`;

const MenuIcon = styled.span`
  width: 31px;
  padding-left: 3px;
`;

const MenuRule = styled.div`
  height: 1px;
  margin: 0 0 1px 31px;
  background: #e1e1e1;
`;

const Collapse = styled.button`
  display: flex;
  align-items: flex-end;
  margin-left: auto;
  padding: 0 4px 5px;
`;

const QuickAccess = styled.div`
  display: flex;
  align-items: center;
  height: 45px;
  padding: 0 0 11px 18px;
`;

const QuickButton = styled.button`
  display: flex;
  align-items: center;
  gap: 7px;
  width: ${({ $wide }) => ($wide ? 54 : 50)}px;
  height: 22px;
`;

const FormulaBar = styled.div`
  display: flex;
  height: 28px;
  padding-left: 5px;
  input {
    flex: 1;
    min-width: 0;
  }
`;

const NameBox = styled.div`
  display: flex;
  align-items: center;
  width: 124px;
  padding: 0 5px 0 6px;
  background: #fff;
  border: 1px solid #c6c6c6;
  font: 14px/20px Roboto, sans-serif;
`;

const Grip = styled.div`
  width: 30px;
  display: flex;
  align-items: center;
  justify-content: center;
`;

const Dots = styled.span`
  width: 2px;
  height: 10px;
  background: repeating-linear-gradient(#aaa 0 2px, transparent 2px 4px);
`;

const FormulaButtons = styled.div`
  display: grid;
  grid-template-columns: repeat(3, 1fr);
  width: 110px;
  margin-right: 3px;
  background: #fff;
  border: 1px solid #c6c6c6;
  button {
    display: flex;
    align-items: center;
    justify-content: center;
  }
`;

const Fx = styled.span`
  font: italic 700 14px/16px "Liberation Serif", serif;
  color: #666;
  small {
    font-size: 12px;
  }
`;

const FormulaField = styled.div`
  flex: 1;
  display: flex;
  align-items: center;
  padding: 0 4px;
  background: #fff;
  border: 1px solid #c6c6c6;
  border-right: 0;
`;

const SheetArea = styled.section`
  flex: 1;
  min-height: 0;
  display: flex;
  gap: 3px;
  padding-top: 10px;
`;

const SheetViewport = styled.div`
  flex: 1;
  overflow: hidden;
  border-right: 1px solid #999;
`;

const Grid = styled.table`
  width: 100%;
  table-layout: fixed;
  border-spacing: 0;
  font-family: Roboto, "Noto Sans CJK SC", sans-serif;
`;

const HeaderCol = styled.col`
  width: 29px;
`;

const DataCol = styled.col`
  width: 181px;
`;

const Corner = styled.th`
  height: 19px;
  padding: 0 3px 3px;
  vertical-align: bottom;
  border-right: 1px solid #bbb;
  border-bottom: 1px solid #999;
  svg {
    margin-left: auto;
  }
`;

const ColumnHeader = styled.th`
  height: 19px;
  padding: 4px 0 0;
  font-size: 14px;
  line-height: 14px;
  font-weight: 400;
  color: ${({ $active }) => ($active ? "#217346" : "#222")};
  background: ${({ $active }) => ($active ? "#d2d2d2" : "#e6e6e6")};
  border-right: 1px solid #bbb;
  border-bottom: 1px solid ${({ $active }) => ($active ? "#217346" : "#999")};
  box-shadow: ${({ $active }) => ($active ? "inset 0 -1px #217346" : "none")};
  &:last-child {
    border-right: 0;
  }
`;

const RowHeader = styled.th`
  height: 51px;
  padding: 0;
  vertical-align: bottom;
  font-size: 14px;
  line-height: 14px;
  font-weight: 400;
  color: ${({ $active }) => ($active ? "#217346" : "#222")};
  background: ${({ $active }) => ($active ? "#d2d2d2" : "#e6e6e6")};
  border-right: 1px solid ${({ $active }) => ($active ? "#217346" : "#999")};
  border-bottom: 1px solid #bbb;
  box-shadow: ${({ $active }) => ($active ? "inset -1px 0 #217346" : "none")};
`;

const Cell = styled.td`
  position: relative;
  height: 51px;
  padding: 4px 0 0;
  text-align: center;
  font-size: 19px;
  line-height: 24px;
  font-weight: 300;
  color: #000;
  background: #fff;
  border-right: 1px solid #d4d4d4;
  border-bottom: 1px solid #d4d4d4;
  &:last-child {
    border-right: 0;
  }
  ${({ $selected }) =>
    $selected &&
    `
    z-index: 1;
    &::before {
      content: "";
      position: absolute;
      inset: -2px;
      border: 2px solid #217346;
    }
    &::after {
      content: "";
      position: absolute;
      right: -4px;
      bottom: -4px;
      width: 7px;
      height: 7px;
      background: #217346;
      border: 1px solid #fff;
    }
  `}
`;

const VScroll = styled.div`
  width: 12px;
  display: flex;
  flex-direction: column;
  overflow: hidden;
  padding-top: 2px;
  button {
    width: 15px;
    height: 15px;
    display: flex;
    align-items: center;
    justify-content: center;
    background: #fff;
    border: 1px solid #ababab;
  }
`;

const VThumb = styled.div`
  width: 15px;
  height: 25px;
  background: #fff;
  border: 1px solid #ababab;
  border-top: 0;
`;

const VTrack = styled.div`
  flex: 1;
  background: #dadada;
`;

const SheetBar = styled.div`
  display: flex;
  height: 28px;
  border-top: 1px solid #999;
  font-size: 13px;
`;

const SheetNav = styled.div`
  display: flex;
  align-items: center;
  justify-content: center;
  gap: 24px;
  width: 100px;
  padding: 0 12px 2px 0;
`;

const SheetTab = styled.button`
  display: flex;
  height: 20px;
  margin-top: 3px;
  border-left: 1px solid #999;
  padding: 0 2px;
  color: ${({ $color }) => ($color ? "#000" : "#444")};
  white-space: nowrap;
  span {
    height: 21px;
    padding: ${({ $color }) => ($color ? "0 11px 0 10px" : "0 9px 0 10px")};
    line-height: 16px;
    background: ${({ $color }) => $color || "none"};
  }
`;

const ActiveSheet = styled.button`
  height: 26px;
  margin-top: -1px;
  padding: 0 13px 2px;
  background: #fff;
  color: #217346;
  border: 1px solid #999;
  border-width: 0 1px;
  box-shadow: inset 0 -2px #217346;
`;

const AddSheet = styled.button`
  margin-left: 33px;
`;

const HScroll = styled.div`
  flex: 0 1 674px;
  display: flex;
  height: 15px;
  margin: 6px 16px 0 auto;
  button {
    width: 15px;
    display: flex;
    align-items: center;
    justify-content: center;
    background: #fff;
    border: 1px solid #ababab;
  }
`;

const HThumb = styled.div`
  flex: 8;
  background: #fff;
  border: 1px solid #ababab;
  border-left-width: 2px;
`;

const HTrack = styled.div`
  flex: 1;
  background: #dadada;
`;

const StatusBar = styled.footer`
  display: flex;
  align-items: center;
  gap: 19px;
  height: 19px;
  padding-left: 7px;
  background: #f1f1f1;
  border-top: 1px solid #bbb;
`;

const StatusRight = styled.div`
  display: flex;
  align-items: center;
  height: 18px;
  margin-left: auto;
  padding-right: 14px;
`;

const ViewButton = styled.button`
  width: 38px;
  height: 18px;
  display: flex;
  align-items: center;
  justify-content: center;
  background: ${({ $on }) => ($on ? "#c8c8c8" : "none")};
`;

const ZoomStep = styled.button`
  display: flex;
  align-items: center;
  justify-content: center;
  width: 15px;
  height: 18px;
`;

const ZoomSlider = styled.input`
  appearance: none;
  width: 101px;
  height: 12px;
  background: linear-gradient(#aaa, #aaa) center / 100% 1px no-repeat;
  &::-webkit-slider-thumb {
    appearance: none;
    width: 4px;
    height: 11px;
    background: #555;
  }
`;

const ZoomValue = styled.span`
  width: 43px;
  text-align: right;
`;

const Annotations = styled.svg`
  position: absolute;
  z-index: 5;
  top: 0;
  left: -1px;
  width: 1700px;
  height: 1036px;
  pointer-events: none;
  g {
    filter: drop-shadow(2px 2px 2px rgba(0, 0, 0, 0.5));
  }
`;

const Watermark = styled.div`
  position: absolute;
  z-index: 4;
  right: 10px;
  bottom: 6px;
  display: flex;
  align-items: center;
  opacity: 0.8;
  pointer-events: none;
  strong,
  em {
    display: block;
    font-style: normal;
  }
  strong {
    font: 700 21px/26px "Noto Sans CJK SC", sans-serif;
    color: #3f8acb;
  }
  em {
    font: 500 17px/20px Roboto, sans-serif;
    color: #2fae5a;
  }
`;

export default App;
